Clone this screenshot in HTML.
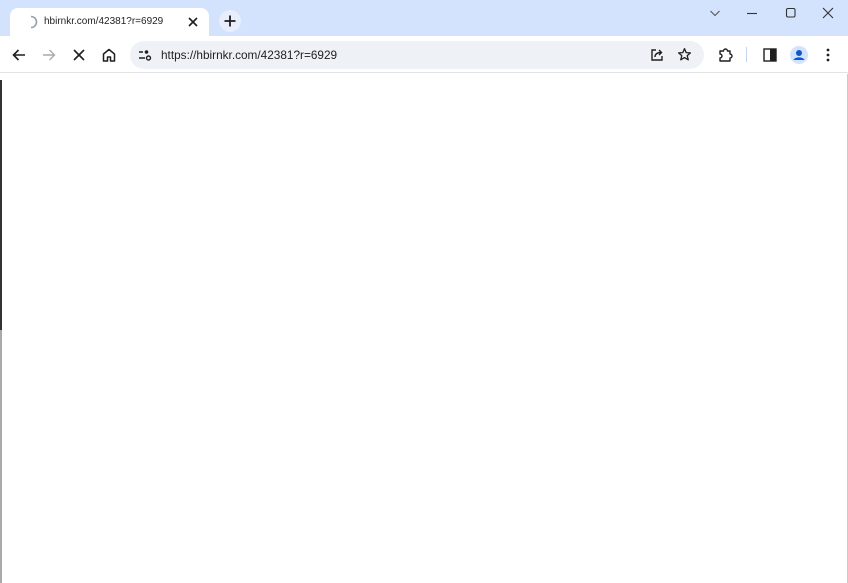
<!DOCTYPE html>
<html><head><meta charset="utf-8"><style>
*{margin:0;padding:0;box-sizing:border-box}
body{width:848px;height:583px;overflow:hidden;background:#fff;font-family:"Liberation Sans",sans-serif;position:relative}
.top{position:absolute;left:0;top:0;width:848px;height:36px;background:#d3e3fd}
.tab{position:absolute;left:10px;top:8px;width:199px;height:30px;background:#fff;border-radius:8px 8px 0 0}
.tabt{position:absolute;left:34px;top:8px;font-size:10px;color:#1f1f1f}
.tool{position:absolute;left:0;top:36px;width:848px;height:37px;background:#fff;border-bottom:1px solid #e3e3e3}
.omni{position:absolute;left:130px;top:5px;width:574px;height:28px;background:#eef1f6;border-radius:14px}
.url{position:absolute;left:31px;top:7px;font-size:11.8px;color:#1f1f1f}
svg{position:absolute}
.edge{position:absolute;left:0;top:80px;width:2px;height:250px;background:#333}
.edge2{position:absolute;left:0;top:330px;width:2px;height:253px;background:#aaa}
.redge{position:absolute;right:0;top:74px;width:1px;height:509px;background:#ccc}
</style></head><body>
<div class="top">
 <div class="tab">
  <svg style="left:14px;top:7px" width="14" height="14" viewBox="0 0 14 14"><path d="M7 1.5A5.5 5.5 0 0 1 7 12.5" fill="none" stroke="#9aa0a6" stroke-width="1.6"/></svg>
  <div class="tabt">hbirnkr.com/42381?r=6929</div>
  <svg style="left:177px;top:8px" width="12" height="12" viewBox="0 0 12 12"><path d="M2 2L10 10M10 2L2 10" stroke="#1f1f1f" stroke-width="1.6"/></svg>
 </div>
 <svg style="left:219px;top:10px" width="22" height="22" viewBox="0 0 22 22"><circle cx="11" cy="11" r="11" fill="#e8eefb"/><path d="M11 5.5V16.5M5.5 11H16.5" stroke="#1f1f1f" stroke-width="1.8"/></svg>
 <svg style="left:709px;top:8px" width="12" height="10" viewBox="0 0 12 10"><path d="M1.5 3L6 7.5L10.5 3" fill="none" stroke="#555" stroke-width="1.1"/></svg>
 <svg style="left:746px;top:8px" width="12" height="10"><path d="M1 5.5H11" stroke="#333" stroke-width="1.1"/></svg>
 <svg style="left:785px;top:7px" width="12" height="12"><rect x="1.5" y="1.5" width="8.5" height="8.5" rx="1.5" fill="none" stroke="#333" stroke-width="1.1"/></svg>
 <svg style="left:822px;top:7px" width="12" height="12"><path d="M1 1L11 11M11 1L1 11" stroke="#333" stroke-width="1.1"/></svg>
</div>
<div class="tool">
 <svg style="left:11px;top:11px" width="16" height="16" viewBox="0 0 16 16"><path d="M14 8H2.5M7.5 3L2.5 8L7.5 13" fill="none" stroke="#1f1f1f" stroke-width="1.6"/></svg>
 <svg style="left:41px;top:11px" width="16" height="16" viewBox="0 0 16 16"><path d="M2 8H13.5M8.5 3L13.5 8L8.5 13" fill="none" stroke="#aaa" stroke-width="1.4"/></svg>
 <svg style="left:72px;top:12px" width="14" height="14" viewBox="0 0 14 14"><path d="M2 2L12 12M12 2L2 12" stroke="#1f1f1f" stroke-width="1.6"/></svg>
 <svg style="left:101px;top:11px" width="16" height="16" viewBox="0 0 16 16"><path d="M2.5 7L8 2.5L13.5 7V14H9.5V10H6.5V14H2.5Z" fill="none" stroke="#1f1f1f" stroke-width="1.5" stroke-linejoin="round"/></svg>
 <div class="omni">
  <svg style="left:8px;top:8px" width="14" height="12" viewBox="0 0 14 12"><path d="M1 3H5M1 9H7" stroke="#1f1f1f" stroke-width="1.5"/><circle cx="8.5" cy="3" r="1.8" fill="#1f1f1f"/><circle cx="10.5" cy="9" r="2" fill="none" stroke="#1f1f1f" stroke-width="1.4"/></svg>
  <div class="url">https://hbirnkr.com/42381?r=6929</div>
  <svg style="left:520px;top:7px" width="14" height="14" viewBox="0 0 14 14"><path d="M6 2H2V12H12V8" fill="none" stroke="#1f1f1f" stroke-width="1.4"/><path d="M5 9C5 6 7 4.5 11 4.5M9 2L11.5 4.5L9 7" fill="none" stroke="#1f1f1f" stroke-width="1.4"/></svg>
  <svg style="left:547px;top:6px" width="15" height="15" viewBox="0 0 16 16"><path d="M8 1.8L9.8 6L14.3 6.3L10.9 9.2L12 13.7L8 11.3L4 13.7L5.1 9.2L1.7 6.3L6.2 6Z" fill="none" stroke="#1f1f1f" stroke-width="1.4" stroke-linejoin="round"/></svg>
 </div>
 <svg style="left:718px;top:11px" width="16" height="16" viewBox="0 0 16 16"><path d="M2 4H5.5A2 2 0 0 1 9.5 4H12V7A2 2 0 0 1 12 11V14H2V11A2 2 0 0 0 2 7Z" fill="none" stroke="#1f1f1f" stroke-width="1.4" stroke-linejoin="round"/></svg>
 <div style="position:absolute;left:746px;top:11px;width:1px;height:15px;background:#c4d3ef"></div>
 <svg style="left:763px;top:12px" width="14" height="14" viewBox="0 0 14 14"><rect x="1" y="1" width="12" height="12" fill="none" stroke="#1f1f1f" stroke-width="1.4"/><rect x="7" y="1" width="6" height="12" fill="#1f1f1f"/></svg>
 <svg style="left:790px;top:10px" width="18" height="18" viewBox="0 0 18 18"><circle cx="9" cy="9" r="9" fill="#d3e3fd"/><circle cx="9" cy="7" r="3" fill="#0b57d0"/><path d="M3.5 14C5 10.5 13 10.5 14.5 14Z" fill="#0b57d0"/></svg>
 <svg style="left:826px;top:12px" width="4" height="14"><circle cx="2" cy="2" r="1.4" fill="#1f1f1f"/><circle cx="2" cy="7" r="1.4" fill="#1f1f1f"/><circle cx="2" cy="12" r="1.4" fill="#1f1f1f"/></svg>
</div>
<div class="edge"></div><div class="edge2"></div><div class="redge"></div>
</body></html>
